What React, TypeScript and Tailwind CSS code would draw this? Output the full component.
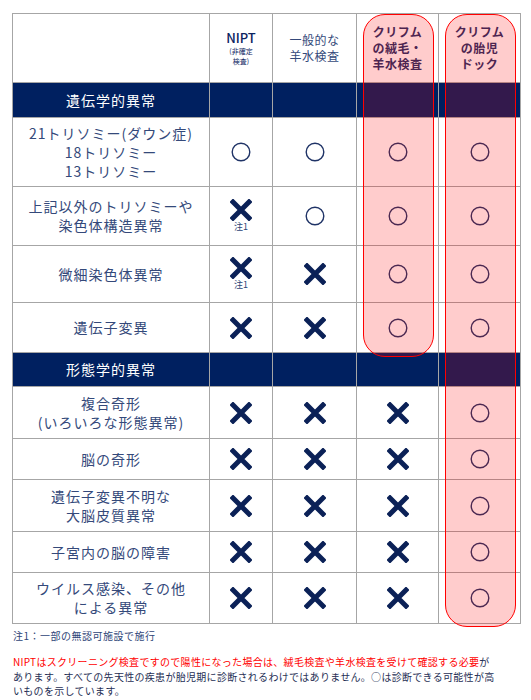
import type { ReactNode } from "react";

const jp = { fontFamily: '"Noto Sans CJK JP", "Noto Sans", sans-serif' };

function Maru() {
  return (
    <svg width="20" height="20" viewBox="0 0 20 20" aria-hidden>
      <circle cx="10" cy="10" r="8.8" fill="none" stroke="#1f3366" strokeWidth="1.4" />
    </svg>
  );
}

function Batsu() {
  return (
    <svg width="22" height="22" viewBox="0 0 22 22" aria-hidden>
      <path d="M3 3 L19 19 M19 3 L3 19" stroke="#0b2157" strokeWidth="5" strokeLinecap="square" />
    </svg>
  );
}

function BatsuNote() {
  return (
    <div className="flex flex-col items-center">
      <Batsu />
      <span className="text-[9px] leading-[12px] text-[#2e4577]">注1</span>
    </div>
  );
}

type Mark = "o" | "x" | "xn";

const markOf = (m: Mark) => (m === "o" ? <Maru /> : m === "x" ? <Batsu /> : <BatsuNote />);

function Cell({ children, className = "" }: { children?: ReactNode; className?: string }) {
  return <div className={`flex items-center justify-center bg-white ${className}`}>{children}</div>;
}

function Section({ label, h }: { label: string; h: string }) {
  return (
    <>
      <div className={`flex items-center justify-center bg-[#002060] text-[14px] tracking-[1px] text-white ${h}`}>
        {label}
      </div>
      <div className="bg-[#002060]" />
      <div className="bg-[#002060]" />
      <div className="bg-[#002060]" />
      <div className="bg-[#002060]" />
    </>
  );
}

function Row({ label, marks, h }: { label: ReactNode; marks: Mark[]; h: string }) {
  return (
    <>
      <Cell className={`text-center text-[14px] leading-[19px] tracking-[1px] text-[#34497a] ${h}`}>{label}</Cell>
      {marks.map((m, i) => (
        <Cell key={i}>{markOf(m)}</Cell>
      ))}
    </>
  );
}

export default function App() {
  return (
    <div className="relative h-[700px] w-[531px] bg-white pl-[12px] pt-[13px]" style={jp}>
      <div className="grid w-[509px] grid-cols-[196px_62px_83px_81px_81px] gap-px bg-[#a6a6a6] p-px">
        {/* header */}
        <Cell className="h-[68px]" />
        <Cell className="flex-col text-[#0c2461]">
          <span className="text-[13px] font-medium leading-[15px]">NIPT</span>
          <span className="mt-[1px] text-[7px] leading-[10px]">(非確定</span>
          <span className="text-[7px] leading-[10px]">検査)</span>
        </Cell>
        <Cell className="text-center text-[12px] leading-[16px] tracking-[0.5px] text-[#34497a]">
          一般的な
          <br />
          羊水検査
        </Cell>
        <Cell className="text-center text-[12px] font-bold leading-[16px] tracking-[0.5px] text-[#1f2f66]">
          クリフム
          <br />
          の絨毛・
          <br />
          羊水検査
        </Cell>
        <Cell className="text-center text-[12px] font-bold leading-[16px] tracking-[0.5px] text-[#1f2f66]">
          クリフム
          <br />
          の胎児
          <br />
          ドック
        </Cell>

        <Section label="遺伝学的異常" h="h-[34px]" />
        <Row
          h="h-[68px]"
          label={
            <>
              21トリソミー(ダウン症)
              <br />
              18トリソミー
              <br />
              13トリソミー
            </>
          }
          marks={["o", "o", "o", "o"]}
        />
        <Row
          h="h-[58px]"
          label={
            <>
              上記以外のトリソミーや
              <br />
              染色体構造異常
            </>
          }
          marks={["xn", "o", "o", "o"]}
        />
        <Row h="h-[56px]" label="微細染色体異常" marks={["xn", "x", "o", "o"]} />
        <Row h="h-[49px]" label="遺伝子変異" marks={["x", "x", "o", "o"]} />

        <Section label="形態学的異常" h="h-[33px]" />
        <Row
          h="h-[51px]"
          label={
            <>
              複合奇形
              <br />
              (いろいろな形態異常)
            </>
          }
          marks={["x", "x", "x", "o"]}
        />
        <Row h="h-[40px]" label="脳の奇形" marks={["x", "x", "x", "o"]} />
        <Row
          h="h-[51px]"
          label={
            <>
              遺伝子変異不明な
              <br />
              大脳皮質異常
            </>
          }
          marks={["x", "x", "x", "o"]}
        />
        <Row h="h-[40px]" label="子宮内の脳の障害" marks={["x", "x", "x", "o"]} />
        <Row
          h="h-[50px]"
          label={
            <>
              ウイルス感染、その他
              <br />
              による異常
            </>
          }
          marks={["x", "x", "x", "o"]}
        />
      </div>

      <p className="mt-[5px] pl-[1px] text-[10px] leading-[14px] tracking-[0.5px] text-[#2e4577]">
        注1：一部の無認可施設で施行
      </p>
      <p className="mt-[12px] whitespace-nowrap pl-[1px] text-[10px] leading-[14.5px] tracking-[0.3px] text-[#1f2f55]">
        <span className="text-[#ff0000]">
          NIPTはスクリーニング検査ですので陽性になった場合は、絨毛検査や羊水検査を受けて確認する必要
        </span>
        が
        <br />
        あります。すべての先天性の疾患が胎児期に診断されるわけではありません。○は診断できる可能性が高
        <br />
        いものを示しています。
      </p>

      {/* highlight overlays */}
      <div className="absolute left-[363px] top-[14px] h-[343px] w-[71px] rounded-[22px] border border-[#ff0000] bg-[rgba(255,0,0,0.2)]" />
      <div className="absolute left-[445px] top-[14px] h-[613px] w-[71px] rounded-[22px] border border-[#ff0000] bg-[rgba(255,0,0,0.2)]" />
    </div>
  );
}
